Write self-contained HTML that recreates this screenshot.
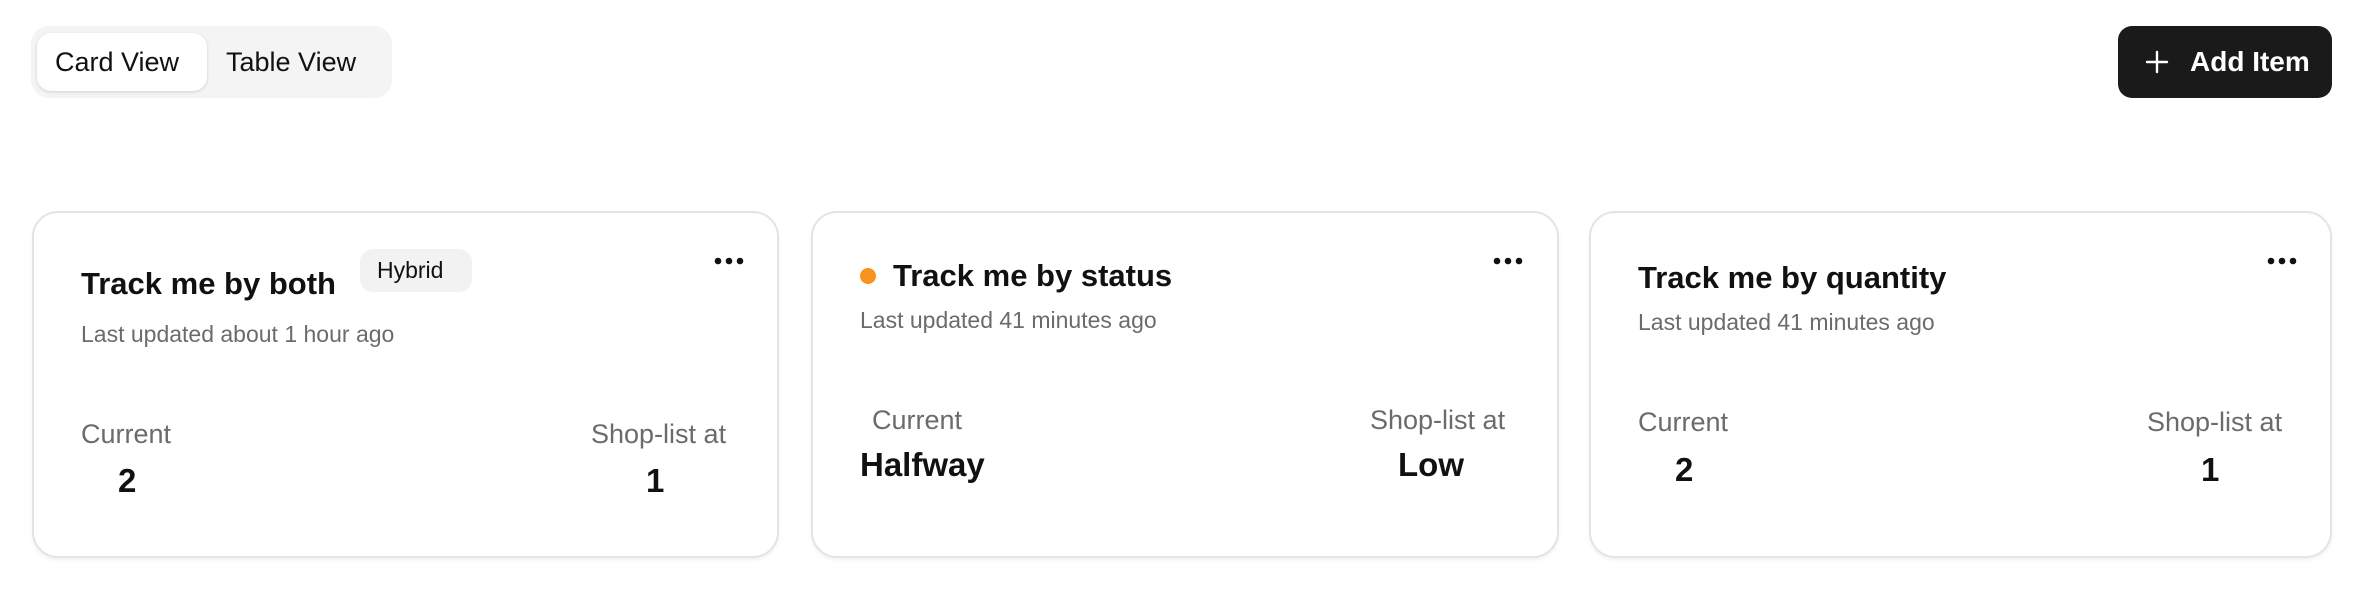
<!DOCTYPE html>
<html><head><meta charset="utf-8"><style>
*{margin:0;padding:0;box-sizing:border-box}
body{width:2366px;height:592px;background:#fff;font-family:"Liberation Sans",sans-serif;color:#111;position:relative;overflow:hidden}
.a{position:absolute;white-space:nowrap}
.seg{position:absolute;left:31px;top:26px;width:361px;height:72px;background:#f4f4f4;border-radius:18px}
.act{position:absolute;left:37px;top:33px;width:170px;height:58px;background:#fff;border-radius:14px;box-shadow:0 1px 3px rgba(0,0,0,.15)}
.btn{position:absolute;left:2118px;top:26px;width:214px;height:72px;background:#1a1a1a;border-radius:14px}
.card{position:absolute;top:211px;height:347px;background:#fff;border:2px solid #e4e4e4;border-radius:26px;box-shadow:0 2px 4px rgba(0,0,0,.06)}
.t{font-weight:bold;font-size:31px;line-height:36px}
.s{font-size:23px;color:#6b6b6b;line-height:28px}
.l{font-size:27px;color:#6b6b6b;line-height:32px}
.v{font-weight:bold;font-size:33px;line-height:38px}
</style></head><body>
<div class="seg"></div><div class="act"></div>
<div class="a" style="left:55px;top:47px;font-size:27px;line-height:30px">Card View</div>
<div class="a" style="left:226px;top:47px;font-size:27px;line-height:30px">Table View</div>
<div class="btn"></div>
<svg class="a" style="left:2145px;top:50px" width="24" height="24" viewBox="0 0 24 24"><path d="M12 2v20M2 12h20" stroke="#fff" stroke-width="2.4" stroke-linecap="round"/></svg>
<div class="a" style="left:2190px;top:47px;font-size:28px;line-height:30px;color:#fff;font-weight:bold">Add Item</div>

<div class="card" style="left:32px;width:747px"></div>
<div class="a t" style="left:81px;top:266px">Track me by both</div>
<div class="a" style="left:360px;top:249px;width:112px;height:43px;background:#f2f2f2;border-radius:13px"></div>
<div class="a" style="left:377px;top:257px;font-size:23px;line-height:26px">Hybrid</div>
<svg class="a" style="left:712px;top:254px" width="36" height="14"><circle cx="6" cy="7" r="3.3" fill="#111"/><circle cx="17" cy="7" r="3.3" fill="#111"/><circle cx="28" cy="7" r="3.3" fill="#111"/></svg>
<div class="a s" style="left:81px;top:320px">Last updated about 1 hour ago</div>
<div class="a l" style="left:81px;top:418px">Current</div>
<div class="a v" style="left:118px;top:462px">2</div>
<div class="a l" style="left:591px;top:418px">Shop-list at</div>
<div class="a v" style="left:646px;top:462px">1</div>

<div class="card" style="left:811px;width:748px"></div>
<div class="a" style="left:860px;top:268px;width:16px;height:16px;border-radius:50%;background:#f7941d"></div>
<div class="a t" style="left:893px;top:258px">Track me by status</div>
<svg class="a" style="left:1491px;top:254px" width="36" height="14"><circle cx="6" cy="7" r="3.3" fill="#111"/><circle cx="17" cy="7" r="3.3" fill="#111"/><circle cx="28" cy="7" r="3.3" fill="#111"/></svg>
<div class="a s" style="left:860px;top:306px">Last updated 41 minutes ago</div>
<div class="a l" style="left:872px;top:404px">Current</div>
<div class="a v" style="left:860px;top:446px">Halfway</div>
<div class="a l" style="left:1370px;top:404px">Shop-list at</div>
<div class="a v" style="left:1398px;top:446px">Low</div>

<div class="card" style="left:1589px;width:743px"></div>
<div class="a t" style="left:1638px;top:260px">Track me by quantity</div>
<svg class="a" style="left:2265px;top:254px" width="36" height="14"><circle cx="6" cy="7" r="3.3" fill="#111"/><circle cx="17" cy="7" r="3.3" fill="#111"/><circle cx="28" cy="7" r="3.3" fill="#111"/></svg>
<div class="a s" style="left:1638px;top:308px">Last updated 41 minutes ago</div>
<div class="a l" style="left:1638px;top:406px">Current</div>
<div class="a v" style="left:1675px;top:451px">2</div>
<div class="a l" style="left:2147px;top:406px">Shop-list at</div>
<div class="a v" style="left:2201px;top:451px">1</div>
</body></html>
